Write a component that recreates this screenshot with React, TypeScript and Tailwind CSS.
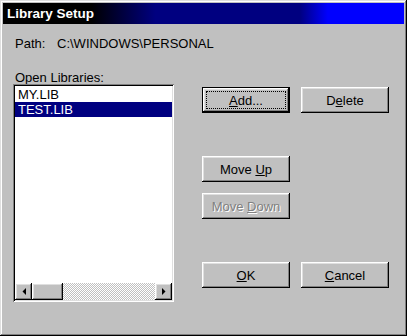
import React from "react";

const bevel =
  "shadow-[inset_-1px_-1px_#000,inset_1px_1px_#fff,inset_-2px_-2px_#808080,inset_2px_2px_#dfdfdf]";

type BtnProps = {
  children: React.ReactNode;
  isDefault?: boolean;
  disabled?: boolean;
};

const Button: React.FC<BtnProps> = ({ children, isDefault, disabled }) => (
  <div
    className={`relative w-[88px] h-[26px] ${
      isDefault ? "border border-black" : ""
    } bg-[#c0c0c0]`}
  >
    <div
      className={`w-full h-full flex items-center justify-center ${bevel} text-[13px] leading-[15px] ${
        disabled ? "text-[#808080] [text-shadow:1px_1px_0_#fff]" : "text-black"
      }`}
    >
      {children}
    </div>
    {isDefault && (
      <div className="absolute inset-[3px] border border-dotted border-black" />
    )}
  </div>
);

const Arrow: React.FC<{ dir: "left" | "right" }> = ({ dir }) => (
  <div className={`w-[17px] h-[17px] flex items-center justify-center bg-[#c0c0c0] ${bevel}`}>
    <svg width="4" height="7" viewBox="0 0 4 7">
      {dir === "left" ? (
        <polygon points="4,0 4,7 0.5,3.5" fill="#000" />
      ) : (
        <polygon points="0,0 0,7 3.5,3.5" fill="#000" />
      )}
    </svg>
  </div>
);

export default function App() {
  return (
    <div className="w-[407px] h-[336px] bg-[#c0c0c0] p-[3px] shadow-[inset_-1px_-1px_#000,inset_1px_1px_#dfdfdf,inset_-2px_-2px_#808080,inset_2px_2px_#fff] font-['Liberation_Sans',Arial,sans-serif] select-none">
      <div className="h-[21px] flex items-center pl-[4px] bg-[linear-gradient(to_right,#000_0%,#000_22%,#000080_38%,#000080_74%,#0000ff_81%,#0000ff_100%)]">
        <span className="text-white font-bold text-[13.5px] leading-[16px]">Library Setup</span>
      </div>

      <div className="pt-[12px] pl-[12px]">
        <div className="flex h-[15px] text-[13px] leading-[15px] text-black">
          <span className="w-[42px]">Path:</span>
          <span>C:\WINDOWS\PERSONAL</span>
        </div>

        <div className="flex mt-[20px]">
          <div className="flex flex-col">
            <div className="h-[13px] text-[13px] leading-[13px] text-black">Open Libraries:</div>
            <div className="ml-[-2px] mt-[0px] w-[161px] h-[218px] p-[2px] bg-white flex flex-col shadow-[inset_1px_1px_#808080,inset_-1px_-1px_#fff,inset_2px_2px_#000,inset_-2px_-2px_#dfdfdf]">
              <div className="flex-1 pt-[1px] text-[13px] leading-[15px]">
                <div className="h-[15px] pl-[3px] text-black">MY.LIB</div>
                <div className="h-[15px] pl-[3px] bg-[#000080] text-white">TEST.LIB</div>
              </div>
              <div className="h-[17px] flex">
                <Arrow dir="left" />
                <div className={`w-[31px] h-[17px] bg-[#c0c0c0] ${bevel}`} />
                <div className="flex-1 h-[17px] bg-[repeating-conic-gradient(#c0c0c0_0%_25%,#ffffff_0%_50%)] bg-size-[2px_2px]" />
                <Arrow dir="right" />
              </div>
            </div>
          </div>

          <div className="ml-[28px] mt-[16px] flex flex-col">
            <div className="flex gap-[11px]">
              <Button isDefault>
                <span>
                  <u>A</u>dd...
                </span>
              </Button>
              <Button>
                <span>
                  D<u>e</u>lete
                </span>
              </Button>
            </div>
            <div className="mt-[43px]">
              <Button>
                <span>
                  Move <u>U</u>p
                </span>
              </Button>
            </div>
            <div className="mt-[11px]">
              <Button disabled>
                <span>
                  Move <u>D</u>own
                </span>
              </Button>
            </div>
            <div className="mt-[43px] flex gap-[11px]">
              <Button>
                <span>
                  <u>O</u>K
                </span>
              </Button>
              <Button>
                <span>
                  <u>C</u>ancel
                </span>
              </Button>
            </div>
          </div>
        </div>
      </div>
    </div>
  );
}
